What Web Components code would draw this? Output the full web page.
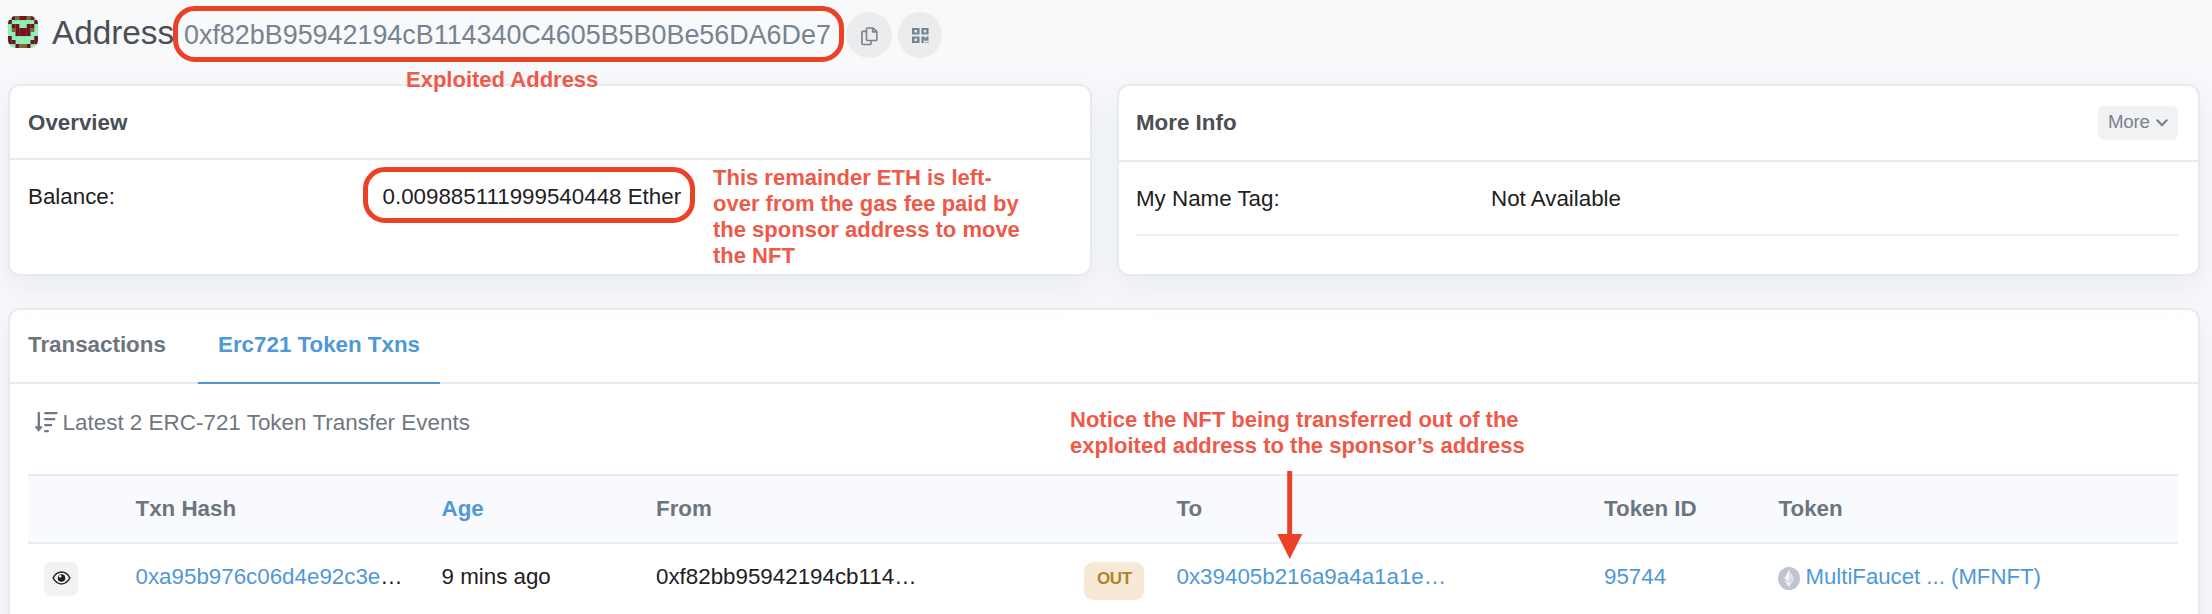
<!DOCTYPE html>
<html lang="en">
<head>
<meta charset="utf-8">
<title>Address</title>
<style>
html,body{margin:0;height:100%;overflow:hidden}
body{background:#f8f9fb;font:22.350px/1.2 "Liberation Sans",Arial,sans-serif;color:#1e2022}
</style>
</head>
<body>
<address-page></address-page>
<script>
const define = (name, css, html, setup) => customElements.define(name, class extends HTMLElement {
  constructor() {
    super();
    const t = document.createElement('template');
    t.innerHTML = `<style>*{box-sizing:border-box}${css}</style>${html}`;
    this.attachShadow({mode: 'open'}).append(t.content.cloneNode(true));
    if (setup) setup(this.shadowRoot);
  }
});

/* Blocky 8x8 identicon */
define('identicon-avatar', `:host{display:block;width:30px;height:32px;border-radius:8px;overflow:hidden}svg{display:block}`,
`<svg width="30" height="32" viewBox="0 0 8 8" preserveAspectRatio="none"><rect width="8" height="8" fill="#8ef0b5"/></svg>`,
root => {
  const rows = ['GDODDODG','DGGGGGGD','GDDGGDDG','GODDDDOG','GGDDDDGG','DGGGGGGD','DDGGGGDD','GGDOODGG'];
  const fill = {D: '#70151d', O: '#7d6a38'};
  const svg = root.querySelector('svg');
  rows.forEach((r, y) => [...r].forEach((c, x) => {
    if (!fill[c]) return;
    const e = document.createElementNS('http://www.w3.org/2000/svg', 'rect');
    e.setAttribute('x', x); e.setAttribute('y', y);
    e.setAttribute('width', 1.02); e.setAttribute('height', 1.02);
    e.setAttribute('fill', fill[c]);
    svg.append(e);
  }));
});

define('round-button', `:host{display:flex;align-items:center;justify-content:center;width:46px;height:46px;border-radius:50%;background:#ebecee;color:#77838f}`, `<slot></slot>`);

define('address-header', `
:host{display:flex;height:84px;padding-left:8px}
identicon-avatar{margin-top:16px}
h1{margin:0 0 0 14px;width:132px;font-size:33.3px;line-height:65px;font-weight:400;color:#4a4f55;white-space:nowrap}
.hash{font-size:26.9px;line-height:70px;color:#77838f;width:662px;margin:0;white-space:nowrap}
round-button{margin-top:12px}
round-button+round-button{margin-left:6px;width:44px}
svg{display:block}`,
`<identicon-avatar></identicon-avatar><h1>Address</h1><span class="hash">0xf82bB95942194cB114340C4605B5B0Be56DA6De7</span>
<round-button><svg style="margin-top:2px" width="17" height="19" viewBox="0 0 18 20" fill="none" stroke="currentColor" stroke-width="1.7" stroke-linejoin="round"><path d="M6.800 1h6l4 3.800v8.400q0 1-1 1H6.800q-1 0-1-1V2q0-1 1-1zM12.300 1.200v3.900h4.300"/><path d="M5.600 4.600H2q-1 0-1 1v11.800q0 1 1 1h7.600q1 0 1-1v-3"/></svg></round-button>
<round-button><svg width="17" height="17" viewBox="0 0 18 18" fill="currentColor"><path fill-rule="evenodd" d="M0 1h8v7H0zM2.600 3.300v2.400h2.800V3.300zM10 1h7.500v7H10zM12.500 3.300v2.400H15V3.300zM0 10h8v7H0zM2.600 12.300v2.400h2.800v-2.400z"/><path d="M10 10h3l1.500 2H15v-2h2.500v4.600H13V13h-.6v4H10zM13.600 15.800h1.400V17h-1.400zM16 15.800h1.500V17H16z"/></svg></round-button>`);

/* White bordered card with an optional header bar */
define('info-card', `
:host{display:flex;flex-direction:column;background:#fff;border:2px solid #e7eaf3;border-radius:12px;box-shadow:0 12px 30px rgba(189,197,209,.25)}
header{display:flex;flex:none;align-items:center;justify-content:space-between;height:var(--head,74px);padding:var(--drop,2px) 20px 0 18px;border-bottom:2px solid #e7eaf3;font-weight:700;color:#4a4f55}`,
`<header><slot name="title"></slot><slot name="action"></slot></header><slot></slot>`);

define('info-row', `
:host{display:flex;flex:none;height:72px;line-height:73px;color:#1e2022}
div{width:var(--label,355px)}`,
`<div><slot name="label"></slot></div><slot></slot>`);

define('more-button', `
:host{display:flex;align-items:center;gap:6px;width:80px;height:34px;padding-left:10px;border-radius:6px;background:#f0f2f4;color:#77838f;font-weight:400;font-size:18.700px;line-height:30px;letter-spacing:-.2px}
span{margin-top:-2px}`,
`<span><slot></slot></span><svg width="12" height="8" viewBox="0 0 12 8" fill="none" stroke="currentColor" stroke-width="2.2" stroke-linecap="round" stroke-linejoin="round"><path d="M1.300 1.300L6 6.200l4.700-4.900"/></svg>`);

define('tab-bar', `
:host{display:flex;height:74px;flex:none;border-bottom:2px solid #e7eaf3;line-height:69px;font-weight:700;color:#6c757e}
.tab{height:74px;padding:0 32px 0 18px;width:188px;white-space:nowrap}
.tab.on{color:#4f98d8;border-bottom:2px solid #4f98d8;padding:0 0 0 20px;width:242px}`,
`<div class="tab">Transactions</div><div class="tab on">Erc721 Token Txns</div>`);

define('list-caption', `
:host{display:flex;height:90px;padding:27px 0 0 25px;color:#6f7880;line-height:36px;font-size:22.450px}
svg{margin-right:4.500px}span{margin-top:-6px}`,
`<svg width="23" height="22" viewBox="0 0 23 22" fill="none" stroke="currentColor" stroke-width="2.3" stroke-linecap="round"><path d="M3.800 2v15"/><path d="M.6 15.800h6.500L3.800 20z" fill="currentColor" stroke-width="1" stroke-linejoin="round"/><path d="M10.200 2.200h11.300M10.200 8.200h9M10.200 14.200h6M10.200 20.200h2.600"/></svg><span><slot></slot></span>`);

define('out-badge', `
:host{display:block;width:60px;height:38px;margin-top:18px;border-radius:9px;background:#f6ead7;color:#b0822b;font-weight:700;font-size:17px;line-height:33px;padding-left:13px;letter-spacing:-.4px}`, `<slot></slot>`);

define('eye-button', `
:host{display:flex;align-items:center;justify-content:center;width:34px;height:34px;margin:18px 0 0 16px;border-radius:6px;background:#f1f2f4;color:#1e2022}svg{margin-top:-3px}`,
`<svg width="19" height="14" viewBox="0 0 20 15"><path d="M1 7.500Q4.500 1.200 10 1.200t9 6.300q-3.500 6.300-9 6.300T1 7.500z" fill="none" stroke="currentColor" stroke-width="1.600"/><circle cx="10" cy="7.500" r="4" fill="currentColor"/><circle cx="8.500" cy="5.700" r="1.400" fill="#f1f2f4"/></svg>`);

define('eth-icon', `:host{display:block;width:22px;height:23px;margin:23px 6px 0 -1px}svg{display:block}`,
`<svg width="22" height="23" viewBox="0 0 22 23"><ellipse cx="11" cy="11.500" rx="11" ry="11.500" fill="#bec4d1"/><path d="M11 3l4.700 8.600L11 14.500l-4.700-2.900z" fill="#f6f7fa"/><path d="M6.300 12.800L11 15.600l4.700-2.800L11 20z" fill="#f6f7fa"/><path d="M11 3v11.500l4.700-2.900zM11 15.600V20l4.700-7.200z" fill="#dfe2e9"/></svg>`);

define('token-table', `
:host{display:block;margin:0 20px 0 18px}
.row{display:grid;grid-template-columns:107.500px 306px 214.500px 428px 92.500px 427.500px 174.500px 1fr;line-height:66px;white-space:nowrap}
.head{height:70px;line-height:65px;border-top:2px solid #e7eaf3;border-bottom:2px solid #e7eaf3;background:#f9fafe;font-weight:700;color:#6c757e}
.l{color:#4f98d8}
.tok{display:flex;font-size:22.200px}`,
`<div class="row head"><span></span><span>Txn Hash</span><span class="l">Age</span><span>From</span><span></span><span>To</span><span>Token ID</span><span>Token</span></div>
<div class="row"><eye-button></eye-button><span><span class="l">0xa95b976c06d4e92c3e</span>…</span><span>9 mins ago</span><span>0xf82bb95942194cb114…</span><out-badge>OUT</out-badge><span class="l">0x39405b216a9a4a1a1e…</span><span class="l">95744</span><span class="l tok"><eth-icon></eth-icon>MultiFaucet ... (MFNFT)</span></div>`);

/* Red hand-placed annotations floating over the page */
define('red-frame', `:host{position:absolute;border:5px solid #ec4126;border-radius:22px;box-sizing:border-box}`, ``);
define('red-note', `:host{position:absolute;font-weight:700;font-size:22px;line-height:26px;color:#ed5a49;white-space:nowrap}`, `<slot></slot>`);
define('red-arrow', `:host{position:absolute}svg{display:block}`,
`<svg width="26" height="88" viewBox="0 0 26 88" fill="#ec4126"><path d="M10.200 0h4.900v63h10.200L12.700 88 .3 63h9.900z"/></svg>`);

define('address-page', `
:host{display:block;position:relative;width:2212px;height:614px;overflow:hidden}
.cards{display:grid;grid-template-columns:1084px 1083px;gap:25px;padding-left:8px;height:192px}
.rule{height:2px;flex:none;margin:0 20px 0 17px;background:#eceef4}
.txns{margin:32px 12px 0 8px;height:340px;background:#fff;border:2px solid #e7eaf3;border-radius:12px;box-shadow:0 12px 30px rgba(189,197,209,.25)}
info-row{margin-left:18px}
info-card+info-card info-row{margin-left:17px}`,
`<address-header></address-header>
<div class="cards">
<info-card><span slot="title">Overview</span><info-row style="--label:354.500px"><span slot="label">Balance:</span><span>0.009885111999540448 Ether</span></info-row></info-card>
<info-card style="--head:76px;--drop:0px"><span slot="title" style="margin-left:-1px">More Info</span><more-button slot="action">More</more-button><info-row><span slot="label">My Name Tag:</span><span>Not Available</span></info-row><div class="rule"></div></info-card>
</div>
<section class="txns"><tab-bar></tab-bar><list-caption>Latest 2 ERC-721 Token Transfer Events</list-caption><token-table></token-table></section>
<red-frame style="left:173px;top:6px;width:671px;height:56px"></red-frame>
<red-note style="left:406px;top:67px">Exploited Address</red-note>
<red-frame style="left:363px;top:167px;width:332px;height:56px"></red-frame>
<red-note style="left:713px;top:165px">This remainder ETH is left-<br>over from the gas fee paid by<br>the sponsor address to move<br>the NFT</red-note>
<red-note style="left:1070px;top:407px">Notice the NFT being transferred out of the<br>exploited address to the sponsor’s address</red-note>
<red-arrow style="left:1277px;top:471px"></red-arrow>`);
</script>
</body>
</html>
